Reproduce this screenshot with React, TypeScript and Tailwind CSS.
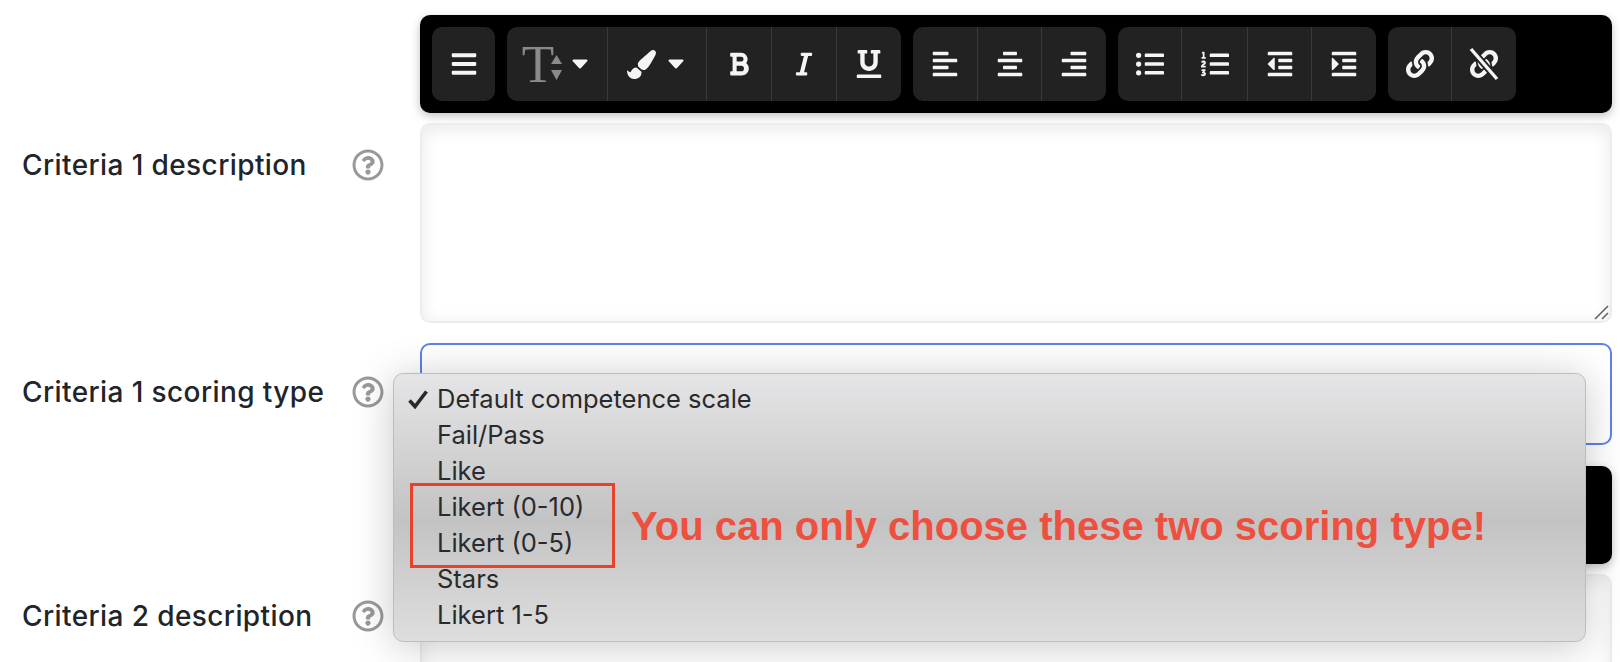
import {
  FaAlignCenter,
  FaAlignLeft,
  FaAlignRight,
  FaBars,
  FaBold,
  FaIndent,
  FaItalic,
  FaLink,
  FaListOl,
  FaListUl,
  FaOutdent,
  FaPaintBrush,
  FaRegQuestionCircle,
  FaUnderline,
} from 'react-icons/fa'

const scoringTypes = ['Default competence scale', 'Fail/Pass', 'Like', 'Likert (0-10)', 'Likert (0-5)', 'Stars', 'Likert 1-5']

function Caret() {
  return (
    <svg width="16" height="10" viewBox="0 0 16 10" className="shrink-0">
      <path d="M1.5 1.5h13L8 8.5z" fill="#f5f5f5" stroke="#f5f5f5" strokeWidth="2" strokeLinejoin="round" />
    </svg>
  )
}

function FontSizeIcon() {
  return (
    <div className="flex items-center">
      <span className="font-['Liberation_Serif',serif] text-[53px] leading-none text-[#8a8a8a]">T</span>
      <svg width="11" height="25" viewBox="0 0 11 25" className="-ml-[3px] mt-[6px]">
        <path d="M5.5 0L11 9H0zM0 15h11L5.5 25z" fill="#8a8a8a" />
      </svg>
    </div>
  )
}

function UnlinkIcon() {
  return (
    <div className="relative h-[29px] w-[28px] text-[#f5f5f5]">
      <FaLink size={28} />
      <svg width="32" height="34" viewBox="0 0 32 34" className="absolute -left-[2px] -top-[3px]">
        <path d="M3 2l26 30" stroke="#222222" strokeWidth="7" />
        <path d="M3 2l26 30" stroke="#f5f5f5" strokeWidth="3.4" />
      </svg>
    </div>
  )
}

function Cell({ w, first, children }: { w: string; first?: boolean; children: React.ReactNode }) {
  return (
    <div className={`flex h-full items-center justify-center text-[#f5f5f5] ${w} ${first ? '' : 'border-l border-[#3a3a3a]'}`}>
      {children}
    </div>
  )
}

function Toolbar() {
  return (
    <div className="flex h-[98px] gap-[12px] rounded-[10px] bg-black p-[12px] shadow-[0_3px_10px_rgba(0,0,0,0.25)]">
      <div className="flex overflow-hidden rounded-[10px] bg-[#222222]">
        <Cell w="w-[63px]" first><FaBars size={28} /></Cell>
      </div>
      <div className="flex overflow-hidden rounded-[10px] bg-[#222222]">
        <Cell w="w-[100px]" first>
          <div className="-ml-[4px] flex items-center gap-[10px]">
            <FontSizeIcon />
            <Caret />
          </div>
        </Cell>
        <Cell w="w-[99px]">
          <div className="-ml-[3px] flex items-center gap-[12px]">
            <FaPaintBrush size={29} />
            <Caret />
          </div>
        </Cell>
        <Cell w="w-[65px]"><FaBold size={26} /></Cell>
        <Cell w="w-[65px]"><FaItalic size={26} /></Cell>
        <Cell w="w-[65px]"><FaUnderline size={28} /></Cell>
      </div>
      <div className="flex overflow-hidden rounded-[10px] bg-[#222222]">
        <Cell w="w-[64px]" first><FaAlignLeft size={28} /></Cell>
        <Cell w="w-[64px]"><FaAlignCenter size={28} /></Cell>
        <Cell w="w-[65px]"><FaAlignRight size={28} /></Cell>
      </div>
      <div className="flex overflow-hidden rounded-[10px] bg-[#222222]">
        <Cell w="w-[63px]" first><FaListUl size={28} /></Cell>
        <Cell w="w-[66px]"><FaListOl size={28} /></Cell>
        <Cell w="w-[64px]"><FaOutdent size={28} /></Cell>
        <Cell w="w-[65px]"><FaIndent size={28} /></Cell>
      </div>
      <div className="flex overflow-hidden rounded-[10px] bg-[#222222]">
        <Cell w="w-[63px]" first><FaLink size={28} /></Cell>
        <Cell w="w-[65px]"><UnlinkIcon /></Cell>
      </div>
    </div>
  )
}

function Label({ text }: { text: string }) {
  return (
    <div className="flex h-[32px] items-center">
      <span className="w-[352px] whitespace-nowrap pl-[22px] font-['Inter',sans-serif] text-[28px] font-medium leading-none tracking-[0.4px] text-[#212529]">{text}</span>
      <FaRegQuestionCircle size={32} className="text-[#999999]" />
    </div>
  )
}

export default function App() {
  return (
    <div className="relative h-[662px] w-[1620px] overflow-hidden bg-white">
      <div className="grid grid-cols-[420px_1192px] pt-[15px]">
        <div />
        <Toolbar />

        <div className="pt-[36px]"><Label text="Criteria 1 description" /></div>
        <div className="mt-[10px] flex h-[200px] items-end justify-end rounded-[10px] border-2 border-[#ececec] bg-white shadow-[inset_0_4px_18px_rgba(0,0,0,0.09)]">
          <svg width="16" height="16" viewBox="0 0 16 16" className="mb-[1px] mr-[1px]">
            <path d="M2 15L15 2M9 15l6-6" stroke="#666666" strokeWidth="1.6" />
          </svg>
        </div>

        <div className="pt-[53px]"><Label text="Criteria 1 scoring type" /></div>
        <div className="mt-[20px] h-[102px] rounded-[10px] border-2 border-[#5c82ea] bg-white" />

        <div />
        <div className="mt-[21px]"><Toolbar /></div>

        <div className="pt-[36px]"><Label text="Criteria 2 description" /></div>
        <div className="mt-[10px] h-[120px] rounded-[10px] border-2 border-[#ececec] bg-white shadow-[inset_0_4px_18px_rgba(0,0,0,0.09)]" />
      </div>

      {/* native select popup, sits over the form */}
      <div className="absolute left-[393px] top-[373px] flex h-[269px] w-[1193px] flex-col rounded-[10px] border border-[#bdbdbd] bg-gradient-to-b from-[#e5e5e7] via-[#c3c3c3] via-55% to-[#dedede] pt-[7px] shadow-[0_4px_40px_rgba(0,0,0,0.22)]">
        {scoringTypes.map((t, i) => (
          <div key={t} className="flex h-[36px] shrink-0 items-center font-['Inter',sans-serif] text-[25.5px] leading-none text-[#2a2a2c]">
            <span className="flex w-[43px] justify-end pr-[8px]">
              {i === 0 && (
                <svg width="22" height="20" viewBox="0 0 22 20">
                  <path d="M2.5 11.5l5.5 6L19.5 2.5" fill="none" stroke="#2a2a2c" strokeWidth="3.6" />
                </svg>
              )}
            </span>
            {t}
          </div>
        ))}
        {/* annotation drawn on the screenshot */}
        <div className="absolute left-[16px] top-[109px] flex items-center">
          <div className="h-[85px] w-[205px] border-[3px] border-[#e8432a]" />
          <span className="ml-[16px] whitespace-nowrap font-['Liberation_Sans',sans-serif] text-[40px] font-bold text-[#ee5040]">
            You can only choose these two scoring type!
          </span>
        </div>
      </div>
    </div>
  )
}
